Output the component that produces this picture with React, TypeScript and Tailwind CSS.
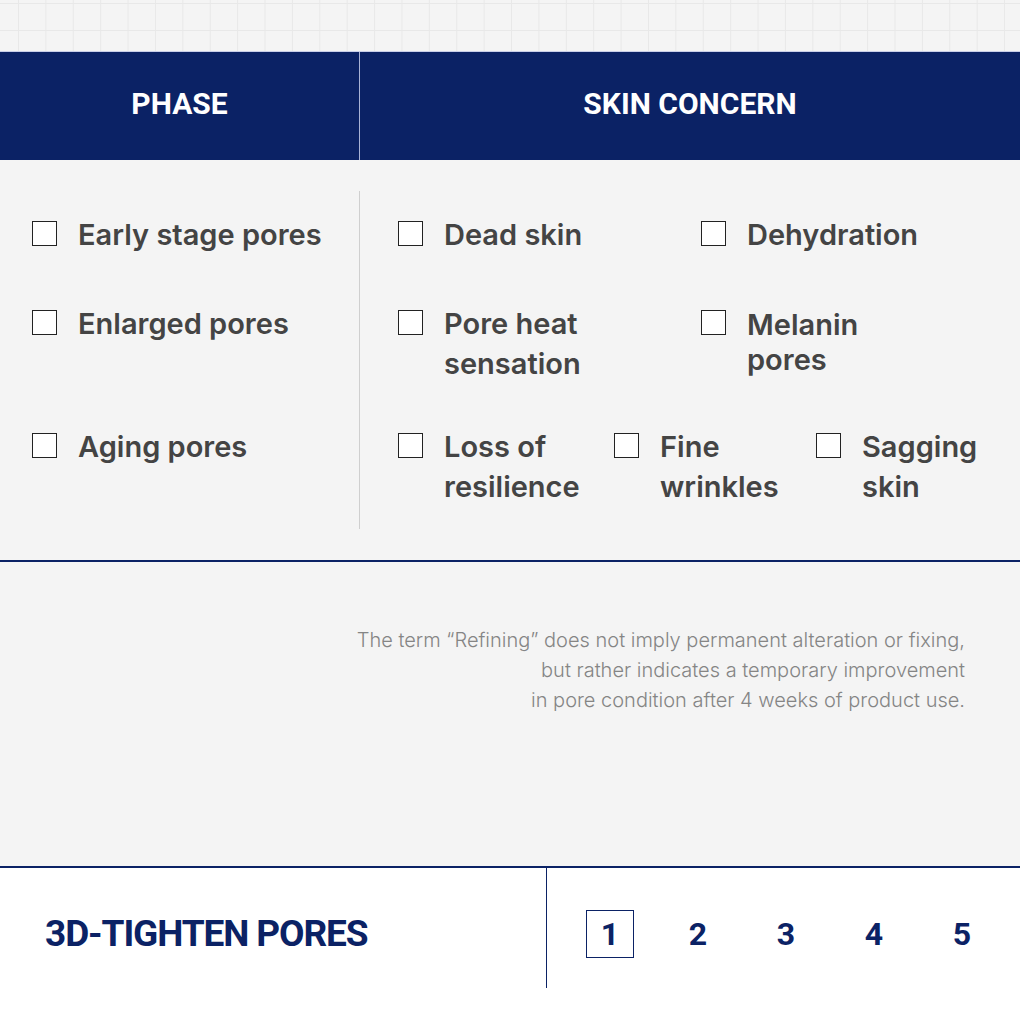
const NAVY = '#0b2265';

type Item = { label: string[]; extra?: string };

function Check({ label, extra = 'leading-[40px]' }: Item) {
  return (
    <div className="flex items-start gap-[21px]">
      <span className="mt-[6px] w-[25px] h-[25px] shrink-0 bg-white border-[1.5px] border-[#222]" />
      <span className={`text-[29px] font-semibold text-[#444] ${extra}`}>
        {label.map((l, i) => (
          <span key={i} className="block whitespace-nowrap">
            {l}
          </span>
        ))}
      </span>
    </div>
  );
}

export default function App() {
  return (
    <div
      className="w-[1020px] h-[1020px] bg-[#f4f4f4] flex flex-col overflow-hidden"
      style={{ fontFamily: 'Inter, "Noto Sans", sans-serif' }}
    >
      {/* grid paper strip */}
      <div className="h-[51px] shrink-0 bg-[#f4f4f4] bg-[linear-gradient(to_right,#e8e8e8_1px,transparent_1px),linear-gradient(to_bottom,#e8e8e8_1px,transparent_1px)] bg-[size:27.4px_27px] bg-[position:18px_3px]" />

      {/* table header */}
      <div
        className="h-[109px] shrink-0 flex bg-[#0b2265] border-t border-[#c9cfe8] text-white font-bold text-[30px]"
        style={{ fontFamily: 'Roboto, "Liberation Sans", sans-serif' }}
      >
        <div className="w-[359px] pb-[6px] flex items-center justify-center">PHASE</div>
        <div className="w-px bg-[#aab3d6]" />
        <div className="flex-1 pb-[6px] flex items-center justify-center">SKIN CONCERN</div>
      </div>

      {/* table body */}
      <div className="h-[400px] shrink-0 flex">
        <div className="w-[359px] pl-[32px] pt-[55px] flex flex-col">
          <div className="h-[89px]">
            <Check label={['Early stage pores']} />
          </div>
          <div className="h-[123px]">
            <Check label={['Enlarged pores']} />
          </div>
          <Check label={['Aging pores']} />
        </div>
        <div className="w-px bg-[#cfcfcf] my-[31px]" />
        <div className="flex-1 pl-[38px] pt-[55px] flex flex-col">
          <div className="h-[89px] flex">
            <div className="w-[303px]">
              <Check label={['Dead skin']} />
            </div>
            <Check label={['Dehydration']} />
          </div>
          <div className="h-[123px] flex">
            <div className="w-[303px]">
              <Check label={['Pore heat', 'sensation']} />
            </div>
            <Check label={['Melanin', 'pores']} extra="leading-[35px] pt-[3px]" />
          </div>
          <div className="flex">
            <div className="w-[216px]">
              <Check label={['Loss of', 'resilience']} />
            </div>
            <div className="w-[202px]">
              <Check label={['Fine', 'wrinkles']} />
            </div>
            <Check label={['Sagging', 'skin']} />
          </div>
        </div>
      </div>

      <div className="h-[2px] shrink-0 bg-[#0b2265]" />

      {/* disclaimer */}
      <div className="h-[304px] shrink-0 pt-[63px] pr-[55px] text-right text-[20px] leading-[30px] font-light text-[#858585]">
        <p>The term “Refining” does not imply permanent alteration or fixing,</p>
        <p>but rather indicates a temporary improvement</p>
        <p>in pore condition after 4 weeks of product use.</p>
      </div>

      <div className="h-[2px] shrink-0 bg-[#0b2265]" />

      {/* footer */}
      <div
        className="flex-1 bg-white flex items-start"
        style={{ fontFamily: 'Roboto, "Liberation Sans", sans-serif', color: NAVY }}
      >
        <div className="w-[546px] h-[132px] pl-[45px] flex items-center text-[37px] font-bold tracking-[-1.1px]">
          3D-TIGHTEN PORES
        </div>
        <div className="w-px h-[120px] bg-[#0b2265]" />
        <div className="h-[132px] pl-[39px] flex items-center gap-[40px] text-[32px] font-bold">
          {[1, 2, 3, 4, 5].map((n) => (
            <span
              key={n}
              className={
                n === 1
                  ? 'w-[48px] h-[48px] flex items-center justify-center border border-[#0b2265]'
                  : 'w-[48px] h-[48px] flex items-center justify-center'
              }
            >
              {n}
            </span>
          ))}
        </div>
      </div>
    </div>
  );
}
